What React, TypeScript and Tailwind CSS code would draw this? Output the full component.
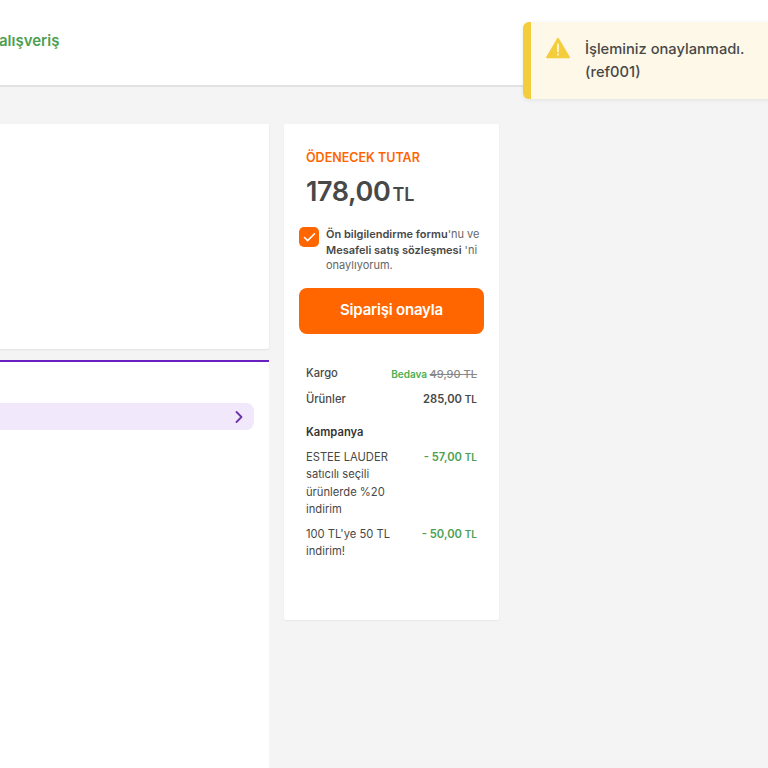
import { Check, ChevronRight } from 'lucide-react';

const App = () => {
  return (
    <div className="relative h-[768px] w-[768px] overflow-hidden bg-[#f4f4f4] font-['Inter',sans-serif] text-[#484848]">
      {/* HEADER */}
      <header className="flex h-[87px] items-center border-b-2 border-[#e2e2e2] bg-white pb-[3px]">
        <span className="-ml-px text-[15px] font-semibold text-[#4c9f50]">alışveriş</span>
      </header>

      <main className="flex gap-[15px] pt-[37px]">
        {/* LEFT COLUMN */}
        <div className="flex w-[269px] flex-col gap-[11px]">
          <div className="h-[225px] rounded-r-[2px] bg-white shadow-[0_1px_2px_rgba(0,0,0,0.08)]" />
          <div className="h-[420px] border-t-2 border-[#6a1fc0] bg-white pr-[15px] pt-[41px]">
            <div className="flex h-[27px] items-center justify-end rounded-r-lg bg-[#f1e8fb] pr-[5px]">
              <ChevronRight className="size-[20px] text-[#6a35a8]" strokeWidth={2.2} />
            </div>
          </div>
        </div>

        {/* SUMMARY */}
        <aside className="h-[496px] w-[215px] rounded-[2px] bg-white px-[15px] pt-[26px] shadow-[0_1px_2px_rgba(0,0,0,0.05)]">
          <div className="px-[7px]">
            <div className="text-[12.5px] leading-4 font-semibold text-[#ff6600]">ÖDENECEK TUTAR</div>
            <div className="mt-[10px] flex items-baseline leading-8">
              <span className="text-[27px] font-semibold tracking-[-0.4px]">178,00</span>
              <span className="ml-[2px] text-lg font-semibold">TL</span>
            </div>
          </div>

          <div className="mt-[16px] flex gap-[7px]">
            <div className="mt-[2px] flex size-[20px] shrink-0 items-center justify-center rounded-[5px] bg-[#ff6600]">
              <Check className="size-[15px] text-white" strokeWidth={2.5} />
            </div>
            <p className="pt-[2px] text-[11px] leading-[15.5px] text-[#666]">
              <strong className="font-semibold text-[#484848]">Ön bilgilendirme formu</strong>'nu ve{' '}
              <strong className="font-semibold text-[#484848]">Mesafeli satış sözleşmesi</strong> 'ni onaylıyorum.
            </p>
          </div>

          <button className="mt-[14px] h-[46px] w-full rounded-lg bg-[#ff6600] text-[15px] font-semibold tracking-[-0.2px] text-white">
            Siparişi onayla
          </button>

          <div className="mt-[31px] px-[7px] text-[11.2px]">
            <div className="flex items-center justify-between leading-[15px]">
              <span className="font-medium">Kargo</span>
              <span className="mt-[2px] text-[10px] font-semibold">
                <span className="text-[#4caf50]">Bedava</span>{' '}
                <span className="text-[11px] font-medium text-[#888] line-through">49,90 TL</span>
              </span>
            </div>
            <div className="mt-[10px] flex items-center justify-between leading-[15px]">
              <span className="font-medium">Ürünler</span>
              <span className="font-semibold">
                285,00 <span className="text-[10px]">TL</span>
              </span>
            </div>
            <div className="mt-[18px] leading-[15px] font-semibold text-[#333]">Kampanya</div>
            <div className="mt-[9px] flex items-start justify-between leading-[17.5px]">
              <span className="w-[90px]">ESTEE LAUDER satıcılı seçili ürünlerde %20 indirim</span>
              <span className="font-semibold text-[#4c9f50]">
                - 57,00 <span className="text-[10px]">TL</span>
              </span>
            </div>
            <div className="mt-[7px] flex items-start justify-between leading-[17.5px]">
              <span className="w-[90px]">100 TL'ye 50 TL indirim!</span>
              <span className="font-semibold text-[#4c9f50]">
                - 50,00 <span className="text-[10px]">TL</span>
              </span>
            </div>
          </div>
        </aside>
      </main>

      {/* TOAST */}
      <div className="absolute top-[22px] left-[523px] flex h-[77px] w-[260px] rounded-md border-l-[8px] border-[#f4cd3d] bg-[#fef8e8] pt-[15px] pl-[15px] shadow-[0_1px_4px_rgba(0,0,0,0.08)]">
        <svg viewBox="0 0 24 22" className="h-[22px] w-[24px] shrink-0">
          <path d="M12 1.5 23.2 20.5H.8Z" fill="#f4cd3d" stroke="#f4cd3d" strokeWidth="1.5" strokeLinejoin="round" />
          <path d="M12 7.5v7" stroke="#fdf3c8" strokeWidth="2" strokeLinecap="round" />
          <circle cx="12" cy="17.6" r="1.1" fill="#fdf3c8" />
        </svg>
        <div className="mt-px ml-[15px] w-[175px] text-[14.7px] leading-[23px] font-medium">İşleminiz onaylanmadı. (ref001)</div>
      </div>
    </div>
  );
};

export default App;
